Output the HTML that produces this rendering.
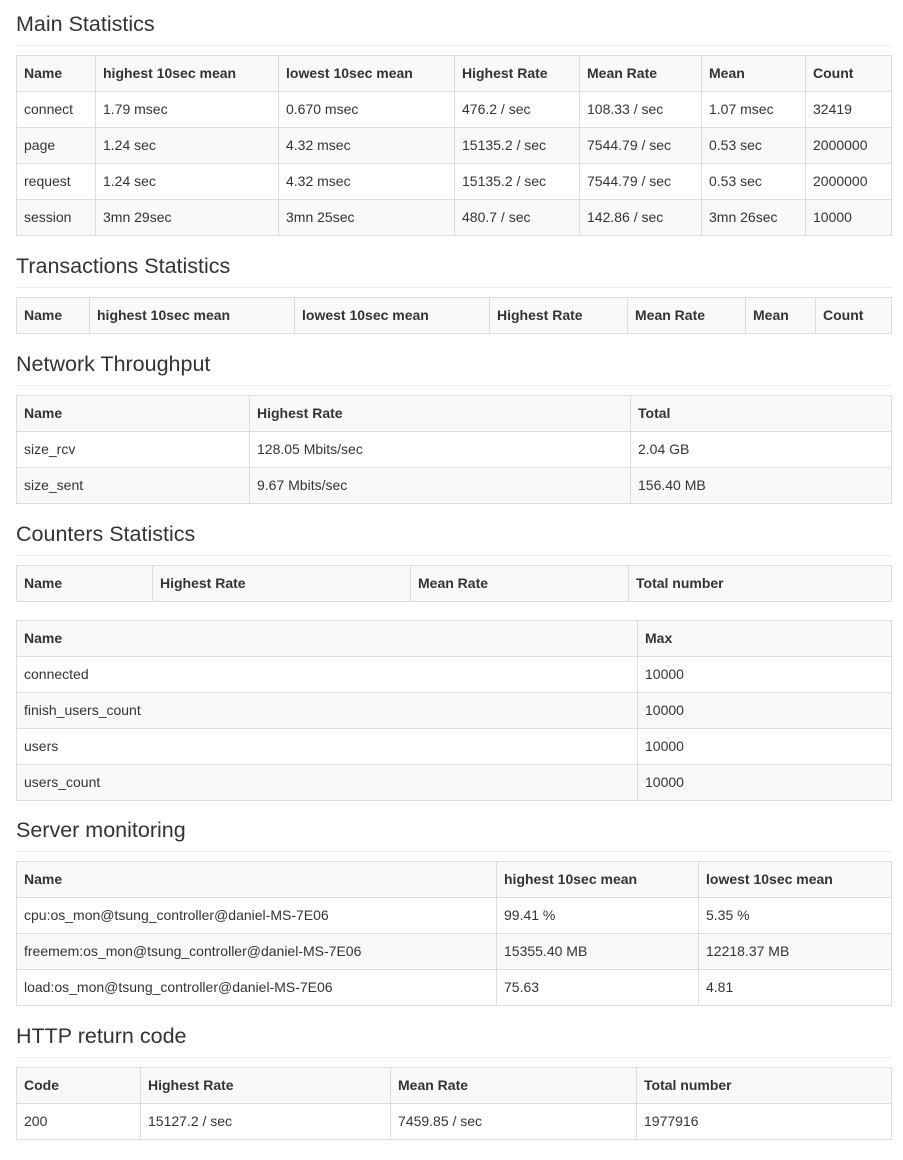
<!DOCTYPE html>
<html><head><meta charset="utf-8"><style>
body{margin:0;padding:13px 11px 0 16px;font-family:"Liberation Sans",sans-serif;color:#333;background:#fff;font-size:14px;}
h2{margin:0 0 9px;padding:1px 0 9px;border-bottom:1px solid #eee;font-size:21.5px;line-height:23px;font-weight:normal;}
h2:first-child{padding-top:0}
h2.s{padding-top:0}
table{border-collapse:collapse;table-layout:fixed;width:876px;margin-bottom:18px;}
td,th{border:1px solid #ddd;padding:8px 7px;line-height:19px;text-align:left;height:19px;white-space:nowrap;overflow:hidden}
th{font-weight:bold}
tr:nth-child(odd){background:#f9f9f9}
</style></head><body>
<h2>Main Statistics</h2>
<table><colgroup><col style="width:79px"><col style="width:183px"><col style="width:176px"><col style="width:125px"><col style="width:122px"><col style="width:104px"><col></colgroup>
<tr><th>Name</th><th>highest 10sec mean</th><th>lowest 10sec mean</th><th>Highest Rate</th><th>Mean Rate</th><th>Mean</th><th>Count</th></tr>
<tr><td>connect</td><td>1.79 msec</td><td>0.670 msec</td><td>476.2 / sec</td><td>108.33 / sec</td><td>1.07 msec</td><td>32419</td></tr>
<tr><td>page</td><td>1.24 sec</td><td>4.32 msec</td><td>15135.2 / sec</td><td>7544.79 / sec</td><td>0.53 sec</td><td>2000000</td></tr>
<tr><td>request</td><td>1.24 sec</td><td>4.32 msec</td><td>15135.2 / sec</td><td>7544.79 / sec</td><td>0.53 sec</td><td>2000000</td></tr>
<tr><td>session</td><td>3mn 29sec</td><td>3mn 25sec</td><td>480.7 / sec</td><td>142.86 / sec</td><td>3mn 26sec</td><td>10000</td></tr>
</table>
<h2>Transactions Statistics</h2>
<table><colgroup><col style="width:73px"><col style="width:205px"><col style="width:195px"><col style="width:138px"><col style="width:118px"><col style="width:70px"><col></colgroup>
<tr><th>Name</th><th>highest 10sec mean</th><th>lowest 10sec mean</th><th>Highest Rate</th><th>Mean Rate</th><th>Mean</th><th>Count</th></tr>
</table>
<h2>Network Throughput</h2>
<table><colgroup><col style="width:233px"><col style="width:381px"><col></colgroup>
<tr><th>Name</th><th>Highest Rate</th><th>Total</th></tr>
<tr><td>size_rcv</td><td>128.05 Mbits/sec</td><td>2.04 GB</td></tr>
<tr><td>size_sent</td><td>9.67 Mbits/sec</td><td>156.40 MB</td></tr>
</table>
<h2>Counters Statistics</h2>
<table><colgroup><col style="width:136px"><col style="width:258px"><col style="width:218px"><col></colgroup>
<tr><th>Name</th><th>Highest Rate</th><th>Mean Rate</th><th>Total number</th></tr>
</table>
<table><colgroup><col style="width:621px"><col></colgroup>
<tr><th>Name</th><th>Max</th></tr>
<tr><td>connected</td><td>10000</td></tr>
<tr><td>finish_users_count</td><td>10000</td></tr>
<tr><td>users</td><td>10000</td></tr>
<tr><td>users_count</td><td>10000</td></tr>
</table>
<h2 class="s">Server monitoring</h2>
<table><colgroup><col style="width:480px"><col style="width:202px"><col></colgroup>
<tr><th>Name</th><th>highest 10sec mean</th><th>lowest 10sec mean</th></tr>
<tr><td>cpu:os_mon@tsung_controller@daniel-MS-7E06</td><td>99.41 %</td><td>5.35 %</td></tr>
<tr><td>freemem:os_mon@tsung_controller@daniel-MS-7E06</td><td>15355.40 MB</td><td>12218.37 MB</td></tr>
<tr><td>load:os_mon@tsung_controller@daniel-MS-7E06</td><td>75.63</td><td>4.81</td></tr>
</table>
<h2>HTTP return code</h2>
<table><colgroup><col style="width:124px"><col style="width:250px"><col style="width:246px"><col></colgroup>
<tr><th>Code</th><th>Highest Rate</th><th>Mean Rate</th><th>Total number</th></tr>
<tr><td>200</td><td>15127.2 / sec</td><td>7459.85 / sec</td><td>1977916</td></tr>
</table>
</body></html>
